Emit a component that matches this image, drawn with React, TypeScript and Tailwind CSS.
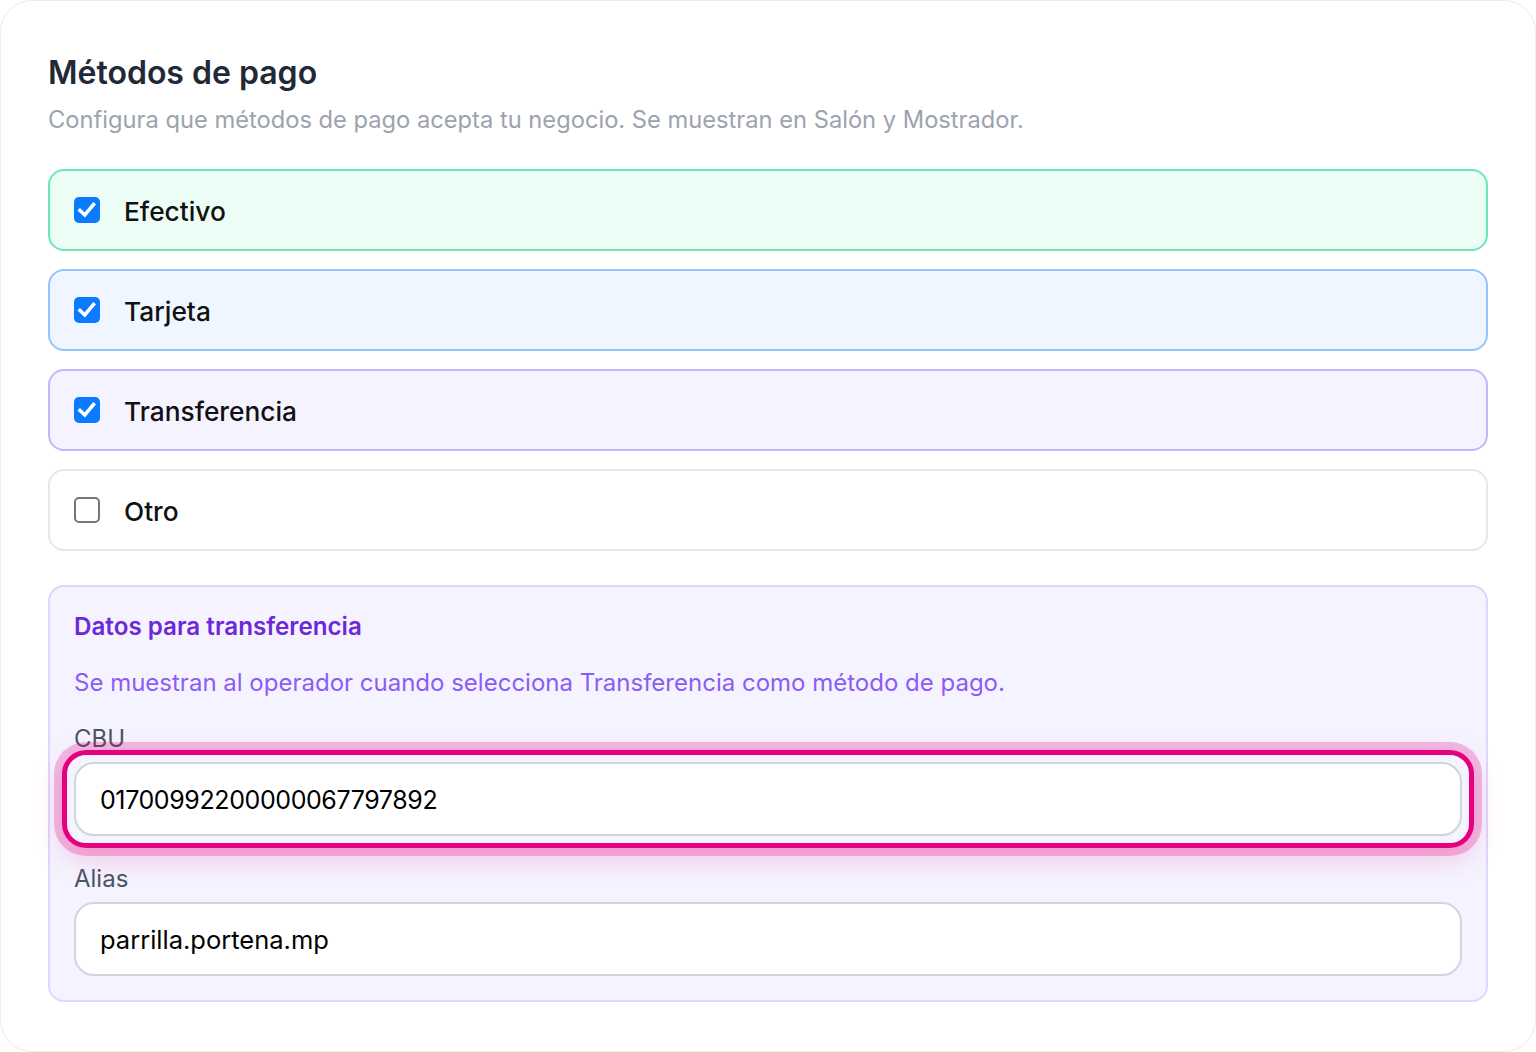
import React from "react";

type Method = {
  label: string;
  checked: boolean;
  tone: string;
};

const methods: Method[] = [
  { label: "Efectivo", checked: true, tone: "bg-[#ecfdf5] border-[#6ee7b7]" },
  { label: "Tarjeta", checked: true, tone: "bg-[#eff6ff] border-[#93c5fd]" },
  { label: "Transferencia", checked: true, tone: "bg-[#f5f3ff] border-[#c4b5fd]" },
  { label: "Otro", checked: false, tone: "bg-white border-[#e5e7eb]" },
];

function Check({ checked }: { checked: boolean }) {
  if (!checked) {
    return (
      <span className="w-[26px] h-[26px] rounded-[5px] border-2 border-[#767676] bg-white shrink-0" />
    );
  }
  return (
    <span className="w-[26px] h-[26px] rounded-[5px] bg-[#0a7aff] shrink-0 flex items-center justify-center">
      <svg width="26" height="26" viewBox="0 0 26 26" fill="none">
        <path
          d="M6 13.5 L10.8 18 L19.5 7.5"
          stroke="white"
          strokeWidth="3.6"
          strokeLinecap="square"
          strokeLinejoin="miter"
        />
      </svg>
    </span>
  );
}

function Field({
  label,
  value,
  valueClass,
  highlighted,
}: {
  label: string;
  value: string;
  valueClass: string;
  highlighted?: boolean;
}) {
  return (
    <div>
      <div className="text-[24px] leading-[34px] text-[#4b5563]">{label}</div>
      <div className="relative mt-[6px]">
        {highlighted && (
          <div className="absolute -inset-[12px] rounded-[24px] border-[5px] border-[#e5007d] shadow-[0_0_0_8px_rgba(229,0,125,0.24),0_10px_30px_rgba(229,0,125,0.2)] pointer-events-none" />
        )}
        <div
          className={`relative h-[74px] rounded-[20px] border-2 border-[#d1d5db] bg-white px-[24px] pt-[3px] flex items-center text-black ${valueClass}`}
        >
          {value}
        </div>
      </div>
    </div>
  );
}

export default function App() {
  return (
    <div
      className="w-[1536px] h-[1052px] bg-white"
      style={{ fontFamily: "Inter, 'Noto Sans', sans-serif" }}
    >
      <div className="w-full h-full rounded-[32px] border border-[#ececee] bg-white px-[47px] pt-[47px]">
        <h1 className="text-[32px] leading-[50px] font-semibold text-[#1f2937]">
          Métodos de pago
        </h1>
        <p className="mt-[6px] text-[23.7px] leading-[32px] text-[#9ca3af]">
          Configura que métodos de pago acepta tu negocio. Se muestran en Salón y Mostrador.
        </p>

        <div className="mt-[33px] flex flex-col gap-[18px]">
          {methods.map((m) => (
            <div
              key={m.label}
              className={`h-[82px] rounded-[16px] border-2 ${m.tone} flex items-center gap-[24px] px-[24px]`}
            >
              <Check checked={m.checked} />
              <span className="pt-[4px] text-[26.3px] font-medium text-[#111111]">{m.label}</span>
            </div>
          ))}
        </div>

        <div className="mt-[34px] rounded-[16px] border-2 border-[#ddd6fe] bg-[#f5f3ff] px-[24px] pt-[24px] pb-[24px]">
          <div className="text-[24.2px] leading-[32px] font-semibold text-[#6d28d9]">
            Datos para transferencia
          </div>
          <p className="mt-[24px] text-[24px] leading-[32px] text-[#8b5cf6]">
            Se muestran al operador cuando selecciona Transferencia como método de pago.
          </p>
          <div className="mt-[23px]">
            <Field
              label="CBU"
              value="01700992200000067797892"
              valueClass="text-[25px] tracking-[-0.4px]"
              highlighted
            />
          </div>
          <div className="mt-[26px]">
            <Field label="Alias" value="parrilla.portena.mp" valueClass="text-[25.5px]" />
          </div>
        </div>
      </div>
    </div>
  );
}
